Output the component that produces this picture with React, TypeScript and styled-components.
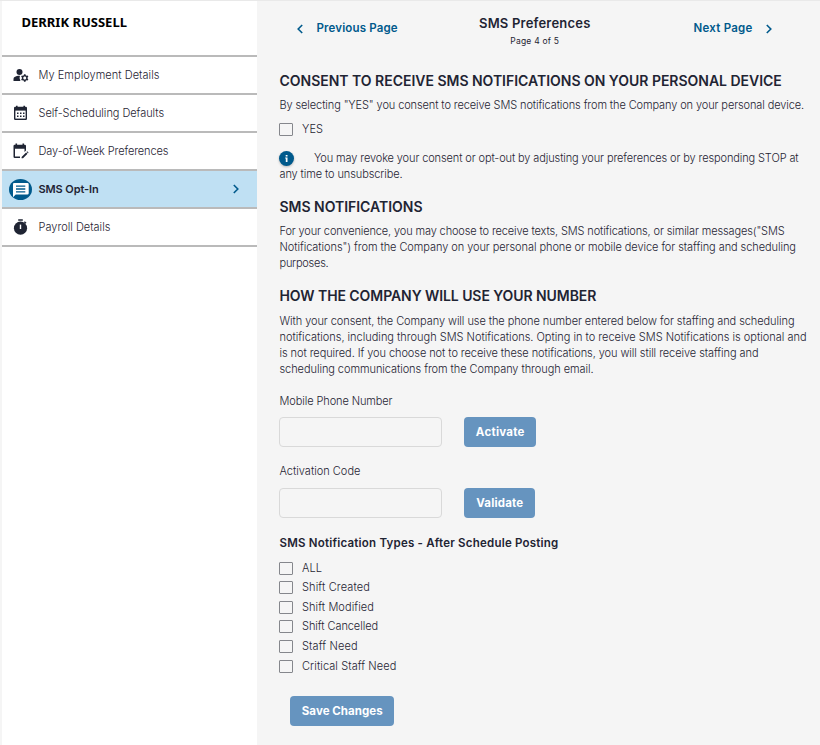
import React from "react";
import styled, { createGlobalStyle } from "styled-components";
import { MdManageAccounts } from "react-icons/md";

const ink = "#1f2433";
const blue = "#005a8c";

const Global = createGlobalStyle`
  * { box-sizing: border-box; }
  body { margin: 0; background: #f5f5f5; color: ${ink}; font: 300 11px/16px Inter, "Liberation Sans", sans-serif; }
  h1, h2, h3, p { margin: 0; font: inherit; }
`;

const Page = styled.div`
  display: flex;
  height: 745px;
  border-top: 1px solid #e9e9e9;
  padding-left: 2px;
  overflow: hidden;
`;

const Sidebar = styled.aside`
  width: 255px;
  background: #fff;
`;

const UserName = styled.div`
  height: 56px;
  border-bottom: 2px solid #bababa;
  padding: 12px 0 0 20px;
  font: 700 13px/18px "Noto Sans", sans-serif;
  color: #000;
`;

const NavItem = styled.a<{ $active?: boolean }>`
  display: flex;
  align-items: center;
  height: 38px;
  border-bottom: 2px solid #bababa;
  background: ${(p) => (p.$active ? "#bfe0f3" : "#fff")};
  font-weight: ${(p) => (p.$active ? 600 : 300)};
`;

const IconCell = styled.span`
  display: flex;
  justify-content: center;
  width: 37px;
`;

const NavChevron = styled.span`
  display: flex;
  margin: 0 17px 0 auto;
  color: ${blue};
`;

const Main = styled.main`
  flex: 1;
  display: flex;
  flex-direction: column;
  align-items: flex-start;
  padding-left: 23px;
`;

const Pager = styled.header`
  display: grid;
  grid-template-columns: 160px 190px 1fr;
  width: 100%;
  height: 72px;
`;

const PageLink = styled.a<{ $next?: boolean }>`
  display: flex;
  align-items: center;
  height: 16px;
  margin-top: 19px;
  padding-left: ${(p) => (p.$next ? "64px" : "16px")};
  gap: ${(p) => (p.$next ? "12px" : "13px")};
  color: ${blue};
  font-weight: 600;
  font-size: 11.5px;

  svg {
    margin-top: 2px;
  }
`;

const Title = styled.div`
  display: flex;
  flex-direction: column;
  align-items: center;
  padding-top: 14px;
`;

const TitleText = styled.h1`
  font-size: 13px;
  font-weight: 600;
`;

const PageCount = styled.p`
  margin-top: 2px;
  font-size: 8.5px;
  font-weight: 400;
`;

const Heading = styled.h2<{ $top?: number }>`
  margin-top: ${(p) => p.$top ?? 0}px;
  font-size: 14px;
  font-weight: 600;
`;

const SubHeading = styled.h3`
  margin-top: 17px;
  font-size: 11.5px;
  font-weight: 600;
`;

const Para = styled.div<{ $top: number }>`
  display: flex;
  flex-direction: column;
  margin-top: ${(p) => p.$top}px;
`;

const Row = styled.div`
  display: flex;
  align-items: center;
`;

const Text = styled.span<{ $ls?: number }>`
  display: block;
  width: max-content;
  margin-left: -0.5px;
  white-space: nowrap;
  letter-spacing: ${(p) => p.$ls ?? 0}px;
`;

const InfoDot = styled.svg`
  width: 15px;
  height: 15px;
  margin-right: 20.5px;
  margin-left: -1px;
  filter: drop-shadow(0 1px 1px rgba(0, 0, 0, 0.25));
`;

const CheckRow = styled.label<{ $top?: number; $h: number }>`
  display: flex;
  align-items: center;
  height: ${(p) => p.$h}px;
  margin-top: ${(p) => p.$top ?? 0}px;
`;

const Box = styled.input.attrs({ type: "checkbox" })`
  appearance: none;
  width: 14px;
  height: 13px;
  margin: 1px 9.5px 0 -1px;
  border: 1px solid #85878c;
  border-radius: 1px;
`;

const Field = styled.input`
  width: 163px;
  height: 30px;
  margin: 0 22px 0 -1px;
  border: 1px solid #d9d9d9;
  border-radius: 4px;
  background: transparent;
`;

const Button = styled.button<{ $w: number }>`
  display: flex;
  align-items: center;
  justify-content: center;
  width: ${(p) => p.$w}px;
  height: 30px;
  padding: 0 0 0 1px;
  border: 0;
  border-radius: 4px;
  background: #6694bf;
  color: #fff;
  font: 700 11.5px/16px Inter, sans-serif;
`;

const Group = styled.div<{ $top: number; $left?: number }>`
  margin-top: ${(p) => p.$top}px;
  margin-left: ${(p) => p.$left ?? 0}px;
`;

const Chevron = ({ left }: { left?: boolean }) => (
  <svg width="8" height="10" viewBox="0 0 8 10" fill="none" stroke="currentColor" strokeWidth="1.6">
    <path d={left ? "M6.2 1 2.2 5l4 4" : "M1.8 1l4 4-4 4"} />
  </svg>
);

const CalendarIcon = () => (
  <svg width="15" height="16" viewBox="0 0 15 16">
    <path d="M1 3q0-1.2 1.2-1.2H3V.8h1.6v1h5.8v-1H12v1h.8Q14 1.800 14 3v10.800q0 1.200-1.200 1.200H2.200Q1 15 1 13.800Z" fill={ink} />
    <path d="M2.400 5.600h10.200v8H2.400z" fill="#fff" />
    <path d="M4 8.300h7.500M4 11.300h7.500" stroke={ink} strokeWidth="1.500" strokeDasharray="1.500 1.500" />
  </svg>
);

const EditCalendarIcon = () => (
  <svg width="17" height="16" viewBox="0 0 17 16">
    <path d="M1.500 3q0-1.200 1.200-1.200h.8V.5h1.600v1.300h5.400V.5h1.600v1.300h.7Q14 1.800 14 3v4.600l-1.500 1.300V5.700H3v7.700h5V15H2.700q-1.200 0-1.200-1.200Z" fill={ink} />
    <path d="M9.600 13.900 14.100 9.400l1.400 1.400-4.500 4.500H9.600zM14.600 8.900l.6-.6 1.400 1.400-.6.6z" fill={ink} />
  </svg>
);

const ChatIcon = () => (
  <svg width="23" height="21" viewBox="0 0 23 21">
    <ellipse cx="11.5" cy="10.5" rx="11.5" ry="10.5" fill={blue} />
    <path d="M5 4h13.400q1.300 0 1.300 1.300v9q0 1.300-1.300 1.300H6.700L4 18.200V5.200Q4 4 5 4Z" fill="#fff" />
    <path d="M7 7.200h9.300M7 10h9.300M7 12.800h9.300" stroke={blue} strokeWidth="1.300" />
  </svg>
);

const TimerIcon = () => (
  <svg width="15" height="16" viewBox="0 0 15 16">
    <path d="M5.200.3h4.600v1.500H5.200zM11.800 2.200l1.700 1.500-1 1-1.600-1.500z" fill={ink} />
    <circle cx="7.5" cy="9.2" r="6.6" fill={ink} />
    <path d="M7.500 5.600v4.400" stroke="#fff" strokeWidth="1.400" />
  </svg>
);

const types: [string, number][] = [
  ["ALL", 0.057],
  ["Shift Created", 0.123],
  ["Shift Modified", 0.079],
  ["Shift Cancelled", -0.073],
  ["Staff Need", 0.12],
  ["Critical Staff Need", 0.08],
];

export default function App() {
  return (
    <>
      <Global />
      <Page>
        <Sidebar>
          <UserName><Text>DERRIK RUSSELL</Text></UserName>
          <NavItem><IconCell><MdManageAccounts size={18} /></IconCell><Text $ls={0.036}>My Employment Details</Text></NavItem>
          <NavItem><IconCell><CalendarIcon /></IconCell><Text $ls={-0.05}>Self-Scheduling Defaults</Text></NavItem>
          <NavItem><IconCell><EditCalendarIcon /></IconCell><Text $ls={-0.11}>Day-of-Week Preferences</Text></NavItem>
          <NavItem $active>
            <IconCell><ChatIcon /></IconCell><Text $ls={-0.11}>SMS Opt-In</Text>
            <NavChevron><Chevron /></NavChevron>
          </NavItem>
          <NavItem><IconCell><TimerIcon /></IconCell><Text>Payroll Details</Text></NavItem>
        </Sidebar>
        <Main>
          <Pager>
            <PageLink><Chevron left /><Text $ls={0.15}>Previous Page</Text></PageLink>
            <Title>
              <TitleText><Text $ls={0.2}>SMS Preferences</Text></TitleText>
              <PageCount><Text $ls={0.23}>Page 4 of 5</Text></PageCount>
            </Title>
            <PageLink $next><Text $ls={0.24}>Next Page</Text><Chevron /></PageLink>
          </Pager>
          <Heading><Text $ls={-0.018}>CONSENT TO RECEIVE SMS NOTIFICATIONS ON YOUR PERSONAL DEVICE</Text></Heading>
          <Para $top={8}><Text $ls={-0.108}>By selecting "YES" you consent to receive SMS notifications from the Company on your personal device.</Text></Para>
          <CheckRow $top={8} $h={16}><Box /><Text $ls={0.05}>YES</Text></CheckRow>
          <Para $top={13}>
            <Row>
              <InfoDot viewBox="0 0 15 15"><circle cx="7.5" cy="7.5" r="7.5" fill={blue} /><path d="M6.700 4h1.800v1.500H6.700zM6.200 6.400h2.300V11H6.800V7.600h-.6z" fill="#fff" /></InfoDot>
              <Text $ls={-0.12}>You may revoke your consent or opt-out by adjusting your preferences or by responding STOP at</Text>
            </Row>
            <Text $ls={-0.107}>any time to unsubscribe.</Text>
          </Para>
          <Heading $top={17}><Text $ls={-0.022}>SMS NOTIFICATIONS</Text></Heading>
          <Para $top={8}>
            <Text $ls={-0.132}>For your convenience, you may choose to receive texts, SMS notifications, or similar messages("SMS</Text>
            <Text $ls={-0.07}>Notifications") from the Company on your personal phone or mobile device for staffing and scheduling</Text>
            <Text $ls={-0.24}>purposes.</Text>
          </Para>
          <Heading $top={17}><Text $ls={-0.075}>HOW THE COMPANY WILL USE YOUR NUMBER</Text></Heading>
          <Para $top={9}>
            <Text $ls={-0.074}>With your consent, the Company will use the phone number entered below for staffing and scheduling</Text>
            <Text $ls={-0.011}>notifications, including through SMS Notifications. Opting in to receive SMS Notifications is optional and</Text>
            <Text $ls={-0.076}>is not required. If you choose not to receive these notifications, you will still receive staffing and</Text>
            <Text $ls={-0.067}>scheduling communications from the Company through email.</Text>
          </Para>
          <Para $top={16}><Text $ls={-0.1}>Mobile Phone Number</Text></Para>
          <Group $top={8}><Row><Field /><Button $w={72}><Text $ls={0.26}>Activate</Text></Button></Row></Group>
          <Para $top={16}><Text>Activation Code</Text></Para>
          <Group $top={9}><Row><Field /><Button $w={71}><Text $ls={0.17}>Validate</Text></Button></Row></Group>
          <SubHeading><Text $ls={0.218}>SMS Notification Types - After Schedule Posting</Text></SubHeading>
          <Group $top={6.8}>
            {types.map(([label, ls]) => (
              <CheckRow key={label} $h={19.6}><Box /><Text $ls={ls}>{label}</Text></CheckRow>
            ))}
          </Group>
          <Group $top={20.6} $left={10}><Button $w={104}><Text $ls={0.05}>Save Changes</Text></Button></Group>
        </Main>
      </Page>
    </>
  );
}
